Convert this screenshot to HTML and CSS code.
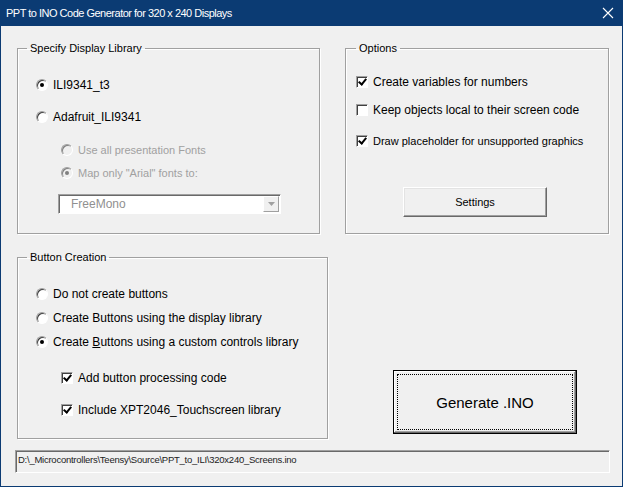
FILE: index.html
```html
<!DOCTYPE html>
<html>
<head>
    <title>PPT to INO Code Generator</title>
    <link rel="stylesheet" href="styles.css">
</head>
<body>
    <div class="window">
        <div class="titlebar">
            <span class="title">PPT to INO Code Generator for 320 x 240 Displays</span>
            <svg class="close" width="12" height="12" viewBox="0 0 12 12">
                <path d="M1 1 L11 11 M11 1 L1 11" stroke="#fff" stroke-width="1.1" fill="none"/>
            </svg>
        </div>

        <div class="client">
            <div class="top-row">
                <fieldset class="frame frame-lib">
                    <legend>Specify Display Library</legend>
                    <div class="opt opt-first">
                        <span class="radio checked"></span>
                        <span class="label">ILI9341_t3</span>
                    </div>
                    <div class="opt opt-second">
                        <span class="radio"></span>
                        <span class="label">Adafruit_ILI9341</span>
                    </div>
                    <div class="opt small sub opt-third">
                        <span class="radio disabled"></span>
                        <span class="label">Use all presentation Fonts</span>
                    </div>
                    <div class="opt small sub opt-fourth">
                        <span class="radio disabled checked"></span>
                        <span class="label">Map only "Arial" fonts to:</span>
                    </div>
                    <div class="combo">
                        <span class="combo-text">FreeMono</span>
                        <span class="combo-btn">
                            <svg width="7" height="4" viewBox="0 0 7 4"><path d="M0 0 H7 L3.5 4 Z" fill="#a0a0a0"/></svg>
                        </span>
                    </div>
                </fieldset>

                <fieldset class="frame frame-options">
                    <legend>Options</legend>
                    <div class="opt opt-o1">
                        <span class="check checked"></span>
                        <span class="label">Create variables for numbers</span>
                    </div>
                    <div class="opt opt-o2">
                        <span class="check"></span>
                        <span class="label">Keep objects local to their screen code</span>
                    </div>
                    <div class="opt small opt-o3">
                        <span class="check checked"></span>
                        <span class="label">Draw placeholder for unsupported graphics</span>
                    </div>
                    <button class="btn settings">Settings</button>
                </fieldset>
            </div>

            <div class="mid-row">
                <fieldset class="frame frame-buttons">
                    <legend>Button Creation</legend>
                    <div class="opt opt-b1">
                        <span class="radio"></span>
                        <span class="label">Do not create buttons</span>
                    </div>
                    <div class="opt opt-b2">
                        <span class="radio"></span>
                        <span class="label">Create Buttons using the display library</span>
                    </div>
                    <div class="opt opt-b3">
                        <span class="radio checked"></span>
                        <span class="label">Create <u>B</u>uttons using a custom controls library</span>
                    </div>
                    <div class="opt sub opt-b4">
                        <span class="check checked"></span>
                        <span class="label">Add button processing code</span>
                    </div>
                    <div class="opt sub opt-b5">
                        <span class="check checked"></span>
                        <span class="label">Include XPT2046_Touchscreen library</span>
                    </div>
                </fieldset>

                <button class="btn generate"><span class="focus">Generate .INO</span></button>
            </div>

            <div class="path">D:\_Microcontrollers\Teensy\Source\PPT_to_ILI\320x240_Screens.ino</div>
        </div>
    </div>
</body>
</html>
```

FILE: styles.css
```css
/* dialog look, classic windows controls */
body {
    margin: 0;
    padding: 0;
    font-family: "Liberation Sans", Arial, sans-serif;
    background: #f0f0f0;
}

.window {
    width: 623px;
    height: 487px;
    box-sizing: border-box;
    border: 1px solid #0b3b73;
    border-top: none;
    background: #f0f0f0;
    overflow: hidden;
}

.titlebar {
    height: 26px;
    margin: 0 -1px;
    background: #0b3b73;
    display: flex;
    align-items: center;
    justify-content: space-between;
    padding: 0 9px 0 6px;
}

.titlebar .title {
    color: #fff;
    font-size: 11px;
    letter-spacing: -0.5px;
}

.client {
    padding: 16px 0 0 16px;
}

.top-row {
    display: flex;
    gap: 25px;
}

.frame {
    margin: 0;
    padding: 0 0 0 18px;
    border: 1px solid #a0a0a0;
    box-shadow: inset 1px 1px 0 #fff, 1px 1px 0 #fff;
    min-width: 0;
    box-sizing: border-box;
}

.frame legend {
    font-size: 11px;
    line-height: 13px;
    padding: 0 3px;
    margin-left: -9px;
    color: #000;
}

.frame-lib {
    width: 303px;
    height: 192px;
}

.frame-options {
    width: 264px;
    height: 192px;
    padding-left: 10px;
}

.frame-options legend {
    margin-left: 0;
}

.frame-buttons {
    width: 311px;
    height: 188px;
}

.opt {
    display: flex;
    align-items: center;
    height: 20px;
    font-size: 12px;
    color: #000;
}

.opt.small {
    font-size: 11px;
}

.opt.sub {
    margin-left: 25px;
}

.opt-first { margin-top: 20px; }
.opt-second { margin-top: 12px; }
.opt-third { margin-top: 13px; }
.opt-fourth { margin-top: 3px; }

.opt-o1 { margin-top: 17px; }
.opt-o2 { margin-top: 8px; }
.opt-o3 { margin-top: 11px; }

.opt-b1 { margin-top: 20px; }
.opt-b2 { margin-top: 4px; }
.opt-b3 { margin-top: 4px; }
.opt-b4 { margin-top: 16px; }
.opt-b5 { margin-top: 12px; }

.opt .radio + .label,
.opt .check + .label {
    margin-left: 5px;
}

/* radio buttons */
.radio {
    width: 12px;
    height: 12px;
    box-sizing: border-box;
    border-radius: 50%;
    border: 1px solid;
    border-color: #a0a0a0 #fff #fff #a0a0a0;
    box-shadow: inset 1px 1px 0 #404040;
    background: #fff;
    position: relative;
    flex: none;
}

.radio.checked::after {
    content: "";
    position: absolute;
    left: 3px;
    top: 3px;
    width: 4px;
    height: 4px;
    border-radius: 50%;
    background: #000;
}

.radio.disabled {
    background: #f0f0f0;
    box-shadow: inset 1px 1px 0 #808080;
}

.radio.disabled.checked::after {
    background: #808080;
}

.opt.sub .radio.disabled ~ .label {
    color: #a0a0a0;
}

/* check boxes */
.check {
    width: 12px;
    height: 12px;
    box-sizing: border-box;
    border: 1px solid;
    border-color: #a0a0a0 #fff #fff #a0a0a0;
    box-shadow: inset 1px 1px 0 #404040;
    background: #fff;
    position: relative;
    flex: none;
}

.check.checked::after {
    content: "";
    position: absolute;
    left: 3px;
    top: 0px;
    width: 3px;
    height: 6px;
    border: solid #000;
    border-width: 0 2px 2px 0;
    transform: rotate(40deg);
}

/* combo box */
.combo {
    margin: 11px 0 0 22px;
    width: 223px;
    height: 20px;
    box-sizing: border-box;
    border: 1px solid;
    border-color: #a0a0a0 #fff #fff #a0a0a0;
    box-shadow: inset 1px 1px 0 #696969;
    background: #fff;
    display: flex;
    align-items: center;
    justify-content: space-between;
    padding-left: 12px;
}

.combo-text {
    font-size: 12px;
    color: #909090;
}

.combo-btn {
    width: 16px;
    height: 16px;
    margin-right: 1px;
    box-sizing: border-box;
    border: 1px solid;
    border-color: #fff #a0a0a0 #a0a0a0 #fff;
    background: #f0f0f0;
    display: flex;
    align-items: center;
    justify-content: center;
}

/* push buttons */
.btn {
    font-family: "Liberation Sans", Arial, sans-serif;
    background: #f0f0f0;
    color: #000;
    border: 1px solid;
    border-color: #fff #696969 #696969 #fff;
    box-shadow: inset -1px -1px 0 #a0a0a0, inset 1px 1px 0 #e3e3e3;
    padding: 0;
    cursor: pointer;
}

.settings {
    display: block;
    margin: 36px 0 0 47px;
    width: 144px;
    height: 30px;
    font-size: 11px;
}

.mid-row {
    display: flex;
    margin-top: 17px;
}

.generate {
    margin: 119px 0 0 65px;
    width: 184px;
    height: 64px;
    font-size: 15px;
    border: 1px solid #000;
    box-shadow: inset -1px -1px 0 #696969, inset 1px 1px 0 #fff, inset -2px -2px 0 #a0a0a0;
    padding: 3px;
    display: flex;
}

.generate .focus {
    flex: 1;
    border: 1px dotted #000;
    display: flex;
    align-items: center;
    justify-content: center;
}

.path {
    margin: 11px 0 0 -2px;
    width: 595px;
    height: 23px;
    box-sizing: border-box;
    border: 1px solid;
    border-color: #a0a0a0 #fff #fff #a0a0a0;
    box-shadow: inset 1px 1px 0 #696969;
    background: #f0f0f0;
    font-size: 9.5px;
    letter-spacing: -0.25px;
    color: #222;
    padding: 3px 0 0 2px;
}
```
